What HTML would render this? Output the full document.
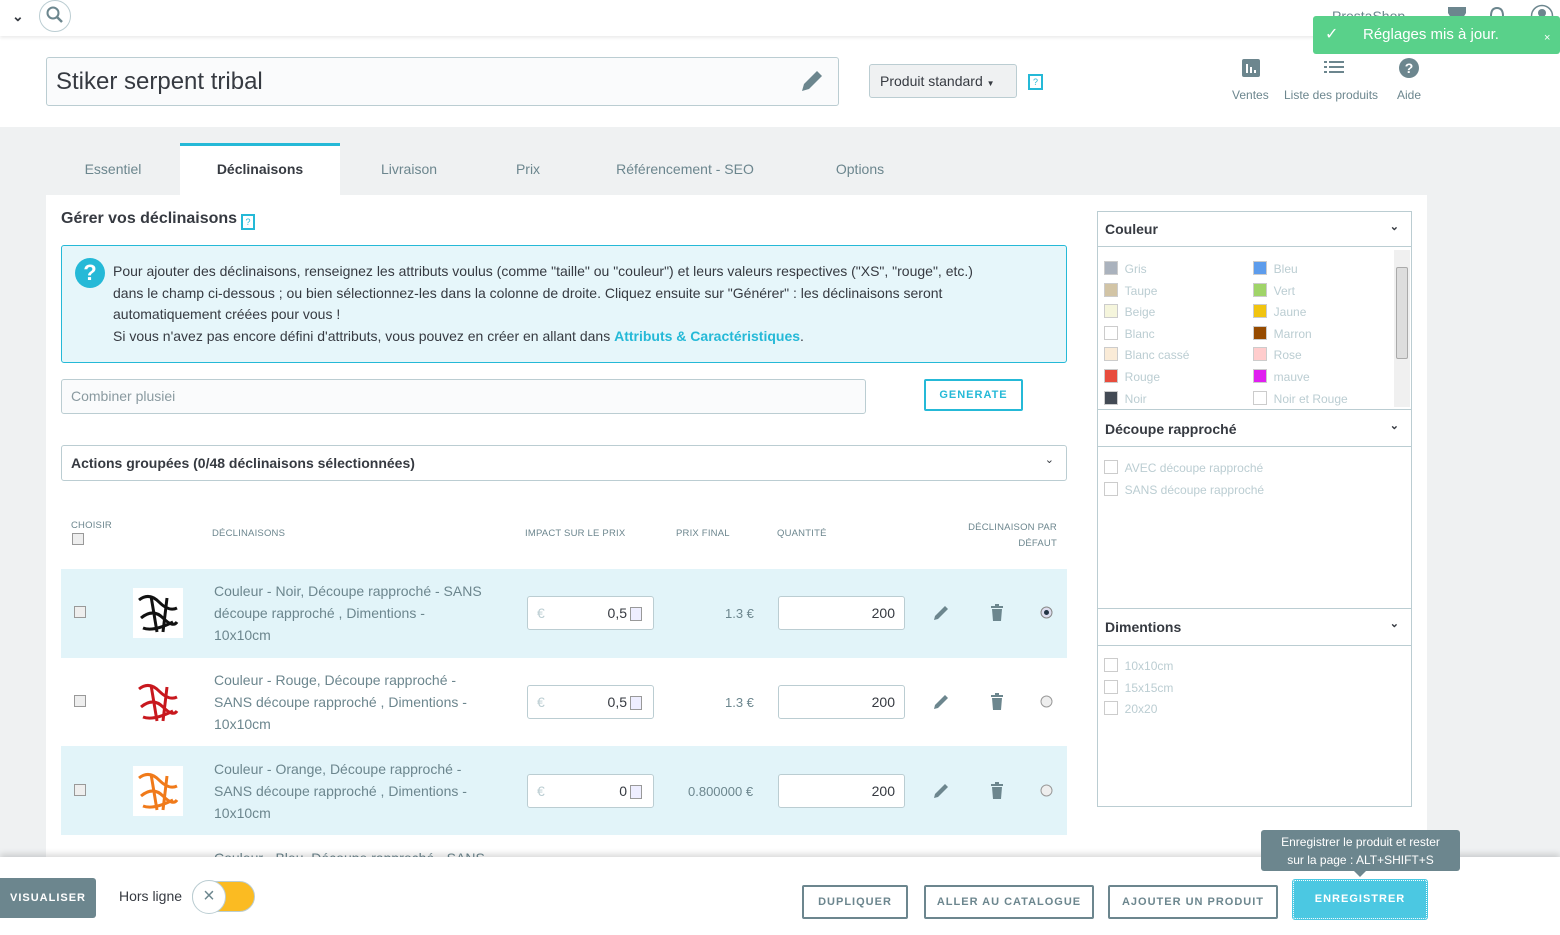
<!DOCTYPE html>
<html><head><meta charset="utf-8">
<style>
*{box-sizing:border-box;margin:0;padding:0}
body{width:1560px;height:935px;overflow:hidden;position:relative;font-family:"Liberation Sans",sans-serif;color:#363a41;background:#eff1f2;font-size:14px}
.a{position:absolute}
.top{left:0;top:0;width:1560px;height:36px;background:#fff;box-shadow:0 2px 3px rgba(0,0,0,.08);z-index:3}
.head{left:0;top:36px;width:1560px;height:91px;background:#fff}
.tab{top:143px;height:52px;line-height:52px;text-align:center;font-size:14px;color:#6c868e}
.panel{left:46px;top:195px;width:1381px;height:680px;background:#fff}
.rcol{border:1px solid #bbcdd2;background:#fff}
.sw{width:14px;height:14px;border:1px solid #ccc;display:inline-block}
.lab{font-size:12px;color:#bbcdd2}
.th{font-size:9.5px;color:#6c868e;letter-spacing:.2px}
.row{left:61px;width:1006px;height:89px}
.desc{font-size:14px;color:#6c868e;line-height:22px}
.inp{border:1px solid #bbcdd2;border-radius:3px;background:#fff;height:34px}
.btn{border:2px solid #6c868e;border-radius:2px;background:#fff;color:#6c868e;font-size:11px;font-weight:bold;letter-spacing:1px;text-align:center;line-height:30px;height:34px}
</style></head><body>
<div class="a top">
 <div class="a" style="left:12px;top:8px;font-size:14px;color:#363a41;font-weight:bold">&#8964;</div>
 <div class="a" style="left:39px;top:0;width:32px;height:32px;border:1px solid #bbcdd2;border-radius:50%"></div>
 <svg class="a" style="left:45px;top:5px" width="20" height="20"><circle cx="8" cy="8" r="5.5" fill="none" stroke="#6c868e" stroke-width="2"/><path d="M12 12l5 5" stroke="#6c868e" stroke-width="2.5"/></svg>
 <div class="a" style="left:1332px;top:8px;font-size:14px;color:#6c868e">PrestaShop</div>
 <svg class="a" style="left:1446px;top:5px" width="22" height="22"><path d="M2 2h18v6q-3 6-9 8q-6-2-9-8z" fill="#6c868e"/><rect x="9" y="16" width="4" height="6" fill="#6c868e"/></svg>
 <svg class="a" style="left:1488px;top:6px" width="18" height="20"><path d="M9 2q6 0 6 8v5l2 2H1l2-2v-5q0-8 6-8z" fill="none" stroke="#6c868e" stroke-width="2"/></svg>
 <svg class="a" style="left:1530px;top:4px" width="24" height="24"><circle cx="12" cy="12" r="10.5" fill="none" stroke="#6c868e" stroke-width="1.5"/><circle cx="12" cy="9" r="4" fill="#6c868e"/><path d="M5 19q7-8 14 0z" fill="#6c868e"/></svg>
</div>
<div class="a" style="left:1313px;top:16px;width:247px;height:38px;background:#59d18a;border-radius:3px;z-index:5;color:#fff">
 <div class="a" style="left:12px;top:8px;font-size:16px">&#10003;</div>
 <div class="a" style="left:50px;top:10px;font-size:15px">Réglages mis à jour.</div>
 <div class="a" style="left:231px;top:16px;font-size:11px">×</div>
</div>
<div class="a head"></div>
<div class="a" style="left:46px;top:57px;width:793px;height:49px;border:1px solid #bbcdd2;border-radius:3px;background:#fafbfc">
 <div class="a" style="left:9px;top:10px;font-size:24px;color:#363a41">Stiker serpent tribal</div>
 <svg class="a" style="left:752px;top:10px" width="26" height="26"><path d="M3 23l2-7L18 3l5 5L10 21z" fill="#6c868e"/></svg>
</div>
<div class="a" style="left:869px;top:64px;width:148px;height:34px;border:1px solid #bbcdd2;border-radius:3px;background:#eff1f2;font-size:14px;line-height:32px;padding-left:10px;color:#363a41">Produit standard <span style="font-size:8px">&#9660;</span></div>
<div class="a" style="left:1028px;top:74px;width:15px;height:16px;border:2px solid #25b9d7;font-size:9px;color:#25b9d7;text-align:center;line-height:12px">?</div>
<svg class="a" style="left:1242px;top:59px" width="18" height="18"><rect width="18" height="18" rx="2" fill="#6c868e"/><path d="M5 5v9M9 8v6M13 11v3" stroke="#fff" stroke-width="2"/></svg>
<svg class="a" style="left:1324px;top:60px" width="20" height="16"><g fill="#6c868e"><rect x="0" y="1" width="3" height="2"/><rect x="5" y="1" width="15" height="2"/><rect x="0" y="6" width="3" height="2"/><rect x="5" y="6" width="15" height="2"/><rect x="0" y="11" width="3" height="2"/><rect x="5" y="11" width="15" height="2"/></g></svg>
<div class="a" style="left:1399px;top:58px;width:20px;height:20px;border-radius:50%;background:#6c868e;color:#fff;font-size:14px;font-weight:bold;text-align:center;line-height:20px">?</div>
<div class="a" style="left:1232px;top:88px;font-size:12px;color:#6c868e">Ventes</div>
<div class="a" style="left:1284px;top:88px;font-size:12px;color:#6c868e">Liste des produits</div>
<div class="a" style="left:1397px;top:88px;font-size:12px;color:#6c868e">Aide</div>

<div class="a" style="left:46px;top:195px;width:1381px;height:1px;background:#dbe2e4"></div>
<div class="a tab" style="left:46px;width:134px">Essentiel</div>
<div class="a tab" style="left:180px;width:160px;background:#fff;border-top:3px solid #25b9d7;color:#363a41;font-weight:bold;line-height:46px">Déclinaisons</div>
<div class="a tab" style="left:340px;width:138px">Livraison</div>
<div class="a tab" style="left:478px;width:100px">Prix</div>
<div class="a tab" style="left:590px;width:190px">Référencement - SEO</div>
<div class="a tab" style="left:800px;width:120px">Options</div>

<div class="a panel"></div>
<div class="a" style="left:61px;top:210px;font-size:16px;font-weight:bold;color:#363a41">Gérer vos déclinaisons</div>
<div class="a" style="left:241px;top:214px;width:14px;height:16px;border:2px solid #25b9d7;font-size:9px;color:#25b9d7;text-align:center;line-height:12px">?</div>
<div class="a" style="left:61px;top:245px;width:1006px;height:118px;background:#e6f6fa;border:1px solid #25b9d7;border-radius:3px">
 <div class="a" style="left:13px;top:12px;width:30px;height:30px;border-radius:50%;background:#25b9d7;color:#fff;font-size:22px;font-weight:bold;text-align:center;line-height:30px">?</div>
 <div class="a" style="left:51px;top:15px;width:950px;font-size:14px;line-height:21.7px;color:#363a41;white-space:nowrap">Pour ajouter des déclinaisons, renseignez les attributs voulus (comme "taille" ou "couleur") et leurs valeurs respectives ("XS", "rouge", etc.)<br>dans le champ ci-dessous ; ou bien sélectionnez-les dans la colonne de droite. Cliquez ensuite sur "Générer" : les déclinaisons seront<br>automatiquement créées pour vous !<br>Si vous n'avez pas encore défini d'attributs, vous pouvez en créer en allant dans <b style="color:#25b9d7">Attributs &amp; Caractéristiques</b>.</div>
</div>
<div class="a inp" style="left:61px;top:379px;width:805px;height:35px;background:#fafbfc;font-size:14px;color:#8a9aa0;padding:8px 9px">Combiner plusiei</div>
<div class="a btn" style="left:924px;top:379px;width:99px;height:32px;border-color:#25b9d7;color:#25b9d7;line-height:28px">GENERATE</div>
<div class="a" style="left:61px;top:445px;width:1006px;height:36px;border:1px solid #bbcdd2;border-radius:3px;font-size:14px;font-weight:bold;padding:9px 9px;color:#363a41">Actions groupées (0/48 déclinaisons sélectionnées)<span class="a" style="right:12px;top:7px;font-size:11px;font-weight:normal">&#8964;</span></div>

<div class="a th" style="left:71px;top:520px">CHOISIR</div>
<div class="a" style="left:72px;top:533px;width:12px;height:12px;border:1px solid #999;background:#eee"></div>
<div class="a th" style="left:212px;top:528px">DÉCLINAISONS</div>
<div class="a th" style="left:525px;top:528px">IMPACT SUR LE PRIX</div>
<div class="a th" style="left:676px;top:528px">PRIX FINAL</div>
<div class="a th" style="left:777px;top:528px">QUANTITÉ</div>
<div class="a th" style="left:940px;top:520px;width:117px;text-align:right;line-height:16px">DÉCLINAISON PAR<br>DÉFAUT</div>

<div class="a row" style="top:569px;background:#e2f4f9"></div>
<div class="a row" style="top:746px;background:#e2f4f9"></div>
<div class="a row" style="top:835px;background:#fff"></div>

<div class="a" style="left:74px;top:606px;width:12px;height:12px;border:1px solid #999;background:#eee"></div>
<div class="a" style="left:133px;top:588px;width:50px;height:50px;background:#fff"><svg width="50" height="50"><path d="M6 12q10-8 20 2t18 6M8 30q12-10 22 0t14 4M10 40q10 4 30-6M18 8l6 36M34 10l-4 34" stroke="#111" stroke-width="3" fill="none"/></svg></div>
<div class="a desc" style="left:214px;top:580px;white-space:nowrap">Couleur - Noir, Découpe rapproché - SANS<br>découpe rapproché , Dimentions -<br>10x10cm</div>
<div class="a inp" style="left:527px;top:596px;width:127px"><span class="a" style="left:9px;top:8px;color:#bbcdd2">€</span><span class="a" style="right:26px;top:8px">0,5</span><span class="a" style="right:11px;top:10px;width:12px;height:14px;border:1px solid #999;background:#eef"></span></div>
<div class="a" style="left:725px;top:606px;font-size:13px;color:#6c868e">1.3 €</div>
<div class="a inp" style="left:778px;top:596px;width:127px"><span class="a" style="right:9px;top:8px">200</span></div>

<div class="a" style="left:74px;top:695px;width:12px;height:12px;border:1px solid #999;background:#eee"></div>
<div class="a" style="left:133px;top:677px;width:50px;height:50px"><svg width="50" height="50"><path d="M6 12q10-8 20 2t18 6M8 30q12-10 22 0t14 4M10 40q10 4 30-6M18 8l6 36M34 10l-4 34" stroke="#c8181e" stroke-width="3" fill="none"/></svg></div>
<div class="a desc" style="left:214px;top:669px;width:280px">Couleur - Rouge, Découpe rapproché - SANS découpe rapproché , Dimentions - 10x10cm</div>
<div class="a inp" style="left:527px;top:685px;width:127px"><span class="a" style="left:9px;top:8px;color:#bbcdd2">€</span><span class="a" style="right:26px;top:8px">0,5</span><span class="a" style="right:11px;top:10px;width:12px;height:14px;border:1px solid #999;background:#eef"></span></div>
<div class="a" style="left:725px;top:695px;font-size:13px;color:#6c868e">1.3 €</div>
<div class="a inp" style="left:778px;top:685px;width:127px"><span class="a" style="right:9px;top:8px">200</span></div>

<div class="a" style="left:74px;top:784px;width:12px;height:12px;border:1px solid #999;background:#eee"></div>
<div class="a" style="left:133px;top:766px;width:50px;height:50px;background:#fff"><svg width="50" height="50"><path d="M6 12q10-8 20 2t18 6M8 30q12-10 22 0t14 4M10 40q10 4 30-6M18 8l6 36M34 10l-4 34" stroke="#f07a1a" stroke-width="3" fill="none"/></svg></div>
<div class="a desc" style="left:214px;top:758px;width:280px">Couleur - Orange, Découpe rapproché - SANS découpe rapproché , Dimentions - 10x10cm</div>
<div class="a inp" style="left:527px;top:774px;width:127px"><span class="a" style="left:9px;top:8px;color:#bbcdd2">€</span><span class="a" style="right:26px;top:8px">0</span><span class="a" style="right:11px;top:10px;width:12px;height:14px;border:1px solid #999;background:#eef"></span></div>
<div class="a" style="left:688px;top:784px;font-size:13px;color:#6c868e">0.800000 €</div>
<div class="a inp" style="left:778px;top:774px;width:127px"><span class="a" style="right:9px;top:8px">200</span></div>
<div class="a desc" style="left:214px;top:847px">Couleur - Bleu, Découpe rapproché - SANS</div>

<svg class="a" style="left:932px;top:604px" width="18" height="18"><path d="M2 16l1-4L13 2l3 3L6 15z" fill="#6c868e"/></svg>
<svg class="a" style="left:932px;top:693px" width="18" height="18"><path d="M2 16l1-4L13 2l3 3L6 15z" fill="#6c868e"/></svg>
<svg class="a" style="left:932px;top:782px" width="18" height="18"><path d="M2 16l1-4L13 2l3 3L6 15z" fill="#6c868e"/></svg>
<svg class="a" style="left:990px;top:604px" width="14" height="18"><rect x="1" y="2" width="12" height="2" fill="#6c868e"/><rect x="5" y="0" width="4" height="2" fill="#6c868e"/><path d="M2 5h10l-1 12H3z" fill="#6c868e"/></svg>
<svg class="a" style="left:990px;top:693px" width="14" height="18"><rect x="1" y="2" width="12" height="2" fill="#6c868e"/><rect x="5" y="0" width="4" height="2" fill="#6c868e"/><path d="M2 5h10l-1 12H3z" fill="#6c868e"/></svg>
<svg class="a" style="left:990px;top:782px" width="14" height="18"><rect x="1" y="2" width="12" height="2" fill="#6c868e"/><rect x="5" y="0" width="4" height="2" fill="#6c868e"/><path d="M2 5h10l-1 12H3z" fill="#6c868e"/></svg>
<svg class="a" style="left:1040px;top:606px" width="13" height="13"><circle cx="6.5" cy="6.5" r="5.5" fill="#dde" stroke="#888"/><circle cx="6.5" cy="6.5" r="2.5" fill="#234"/></svg>
<svg class="a" style="left:1040px;top:695px" width="13" height="13"><circle cx="6.5" cy="6.5" r="5.5" fill="#eee" stroke="#999"/></svg>
<svg class="a" style="left:1040px;top:784px" width="13" height="13"><circle cx="6.5" cy="6.5" r="5.5" fill="#eee" stroke="#999"/></svg>

<div class="a rcol" style="left:1097px;top:211px;width:315px;height:596px"></div>
<div class="a" style="left:1098px;top:212px;width:313px;height:35px;border-bottom:1px solid #bbcdd2;font-weight:bold;font-size:14px;padding:9px 7px">Couleur<span class="a" style="right:12px;top:8px;font-size:11px">&#8964;</span></div>
<div class="a" style="left:1394px;top:250px;width:16px;height:157px;background:#f0f0f0"><div class="a" style="left:2px;top:17px;width:12px;height:92px;background:#ddd;border:1px solid #aaa;border-radius:2px"></div></div>
<div class="a" style="left:1104px;top:259px;width:140px;line-height:21.6px">
 <div class="lab"><span class="sw" style="background:#aab2bd;vertical-align:-2px"></span> &nbsp;Gris</div>
 <div class="lab"><span class="sw" style="background:#d2c4a5;vertical-align:-2px"></span> &nbsp;Taupe</div>
 <div class="lab"><span class="sw" style="background:#f5f5dc;vertical-align:-2px"></span> &nbsp;Beige</div>
 <div class="lab"><span class="sw" style="background:#fff;vertical-align:-2px"></span> &nbsp;Blanc</div>
 <div class="lab"><span class="sw" style="background:#faebd7;vertical-align:-2px"></span> &nbsp;Blanc cassé</div>
 <div class="lab"><span class="sw" style="background:#e84c3d;vertical-align:-2px"></span> &nbsp;Rouge</div>
 <div class="lab"><span class="sw" style="background:#434a54;vertical-align:-2px"></span> &nbsp;Noir</div>
</div>
<div class="a" style="left:1253px;top:259px;width:140px;line-height:21.6px">
 <div class="lab"><span class="sw" style="background:#5d9cec;vertical-align:-2px"></span> &nbsp;Bleu</div>
 <div class="lab"><span class="sw" style="background:#a0d468;vertical-align:-2px"></span> &nbsp;Vert</div>
 <div class="lab"><span class="sw" style="background:#f1c40f;vertical-align:-2px"></span> &nbsp;Jaune</div>
 <div class="lab"><span class="sw" style="background:#964b00;vertical-align:-2px"></span> &nbsp;Marron</div>
 <div class="lab"><span class="sw" style="background:#fcc;vertical-align:-2px"></span> &nbsp;Rose</div>
 <div class="lab"><span class="sw" style="background:#e01ef0;vertical-align:-2px"></span> &nbsp;mauve</div>
 <div class="lab"><span class="sw" style="background:#fff;vertical-align:-2px"></span> &nbsp;Noir et Rouge</div>
</div>
<div class="a" style="left:1098px;top:409px;width:313px;height:38px;border-top:1px solid #bbcdd2;border-bottom:1px solid #bbcdd2;font-weight:bold;font-size:14px;padding:11px 7px">Découpe rapproché<span class="a" style="right:12px;top:9px;font-size:11px">&#8964;</span></div>
<div class="a" style="left:1104px;top:458px;line-height:21.6px">
 <div class="lab"><span class="sw" style="vertical-align:-2px"></span> &nbsp;AVEC découpe rapproché</div>
 <div class="lab"><span class="sw" style="vertical-align:-2px"></span> &nbsp;SANS découpe rapproché</div>
</div>
<div class="a" style="left:1098px;top:608px;width:313px;height:38px;border-top:1px solid #bbcdd2;border-bottom:1px solid #bbcdd2;font-weight:bold;font-size:14px;padding:10px 7px">Dimentions<span class="a" style="right:12px;top:8px;font-size:11px">&#8964;</span></div>
<div class="a" style="left:1104px;top:656px;line-height:21.6px">
 <div class="lab"><span class="sw" style="vertical-align:-2px"></span> &nbsp;10x10cm</div>
 <div class="lab"><span class="sw" style="vertical-align:-2px"></span> &nbsp;15x15cm</div>
 <div class="lab"><span class="sw" style="vertical-align:-2px"></span> &nbsp;20x20</div>
</div>

<div class="a" style="left:0;top:857px;width:1560px;height:78px;background:#fff;box-shadow:0 -3px 6px rgba(0,0,0,.15)"></div>
<div class="a" style="left:0;top:878px;width:96px;height:40px;background:#6c868e;color:#fff;font-size:11px;font-weight:bold;letter-spacing:1px;line-height:40px;text-align:right;padding-right:10px;border-radius:0 3px 3px 0">VISUALISER</div>
<div class="a" style="left:119px;top:888px;font-size:14px;color:#363a41">Hors ligne</div>
<div class="a" style="left:192px;top:881px;width:63px;height:31px;border-radius:16px;background:#fbbb22;border:1px solid #bbcdd2"></div>
<div class="a" style="left:192px;top:880px;width:34px;height:34px;border-radius:50%;background:#fff;border:1px solid #bbcdd2;text-align:center;line-height:30px;font-size:20px;color:#6c868e">×</div>
<div class="a btn" style="left:802px;top:885px;width:106px">DUPLIQUER</div>
<div class="a btn" style="left:924px;top:885px;width:170px">ALLER AU CATALOGUE</div>
<div class="a btn" style="left:1108px;top:885px;width:170px">AJOUTER UN PRODUIT</div>
<div class="a btn" style="left:1293px;top:880px;width:134px;height:39px;line-height:37px;background:#4bc8e2;border:1px dotted #fff;color:#fff;outline:1px solid #4bc8e2">ENREGISTRER</div>
<div class="a" style="left:1261px;top:830px;width:199px;height:41px;background:#6c868e;color:#fff;font-size:12px;text-align:center;line-height:18px;padding-top:3px;border-radius:3px;z-index:6">Enregistrer le produit et rester<br>sur la page : ALT+SHIFT+S</div>
<div class="a" style="left:1354px;top:871px;width:0;height:0;border:6px solid transparent;border-top-color:#6c868e;z-index:6"></div>
</body></html>
